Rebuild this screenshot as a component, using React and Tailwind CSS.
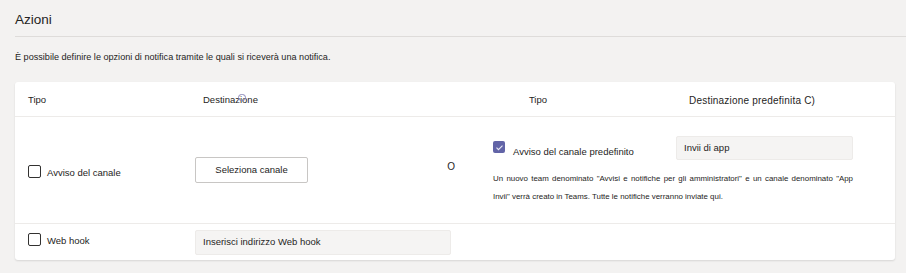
export default function App() {
  return (
    <div className="w-[906px] h-[273px] bg-[#f3f2f1] text-[#252423] overflow-hidden" style={{ fontFamily: '"Liberation Sans", Arial, sans-serif' }}>
      <div className="pl-[15px]">
        <div className="h-[37px] border-b border-[#dedcda] flex items-center">
          <h2 className="text-[13.5px] leading-none pt-[3px]">Azioni</h2>
        </div>
        <p className="text-[9.1px] mt-[14px] leading-[12px]">
          È possibile definire le opzioni di notifica tramite le quali si riceverà una notifica.
        </p>
      </div>

      <div className="relative mt-[19px] ml-[15px] w-[880px] h-[178px] bg-white rounded-[3px] shadow-[0_1px_2px_rgba(0,0,0,0.12)]">
        <div className="h-[35px] border-b border-[#edebe9] flex items-center text-[9.5px] pt-[3px]">
          <span className="ml-[13px] w-[175px]">Tipo</span>
          <span className="relative">
            Destinazione
            <span className="absolute left-[35px] top-[1px] w-[8px] h-[7px] rounded-full border border-[#8a86b8]" />
          </span>
          <span className="ml-[271px]">Tipo</span>
          <span className="ml-[142px] text-[10px] tracking-[0.2px]">Destinazione predefinita C)</span>
        </div>

        <div className="h-[107px] border-b border-[#edebe9] flex">
          <div className="w-[440px] shrink-0 flex items-start">
            <label className="ml-[13px] mt-[45px] w-[167px] flex items-center gap-[6px] text-[9.5px]">
              <span className="w-[13px] h-[13px] border border-[#323130] rounded-[2px] bg-white" />
              <span className="mt-[4px]">Avviso del canale</span>
            </label>
            <button className="mt-[40px] w-[113px] h-[26px] border border-[#c8c6c4] rounded-[2px] bg-white text-[9.5px]">
              Seleziona canale
            </button>
            <span className="ml-auto mt-[42px] text-[10px]">O</span>
          </div>
          <div className="ml-[38px] w-[360px] shrink-0">
            <div className="flex items-start mt-[19px]">
              <span className="shrink-0 mt-[5px] w-[12px] h-[12px] rounded-[2px] bg-[#6264a7] flex items-center justify-center">
                <svg width="9" height="9" viewBox="0 0 12 12" fill="none">
                  <path d="M2 6.2l2.6 2.6L10 3.4" stroke="#e8e8f4" strokeWidth="1.5" />
                </svg>
              </span>
              <span className="shrink-0 whitespace-nowrap ml-[8px] mt-[9px] text-[9.5px]">Avviso del canale predefinito</span>
              <div className="ml-auto w-[177px] h-[24px] bg-[#f5f4f3] border border-[#edebe9] rounded-[2px] flex items-center pl-[7px] text-[9.5px]">
                Invii di app
              </div>
            </div>
            <p className="mt-[10px] text-[7.9px] leading-[18px] text-justify w-[360px]">
              Un nuovo team denominato "Avvisi e notifiche per gli amministratori" e un canale denominato "App Invii" verrà creato in Teams. Tutte le notifiche verranno inviate qui.
            </p>
          </div>
        </div>

        <div className="flex items-start">
          <label className="ml-[13px] mt-[7px] w-[167px] flex items-center gap-[6px] text-[9.5px]">
            <span className="w-[13px] h-[13px] border border-[#323130] rounded-[2px] bg-white" />
            <span className="mt-[3px]">Web hook</span>
          </label>
          <div className="mt-[6px] w-[256px] h-[25px] bg-[#f5f4f3] border border-[#edebe9] rounded-[2px] flex items-center pl-[7px] text-[9.5px]">
            Inserisci indirizzo Web hook
          </div>
        </div>
      </div>
    </div>
  );
}
